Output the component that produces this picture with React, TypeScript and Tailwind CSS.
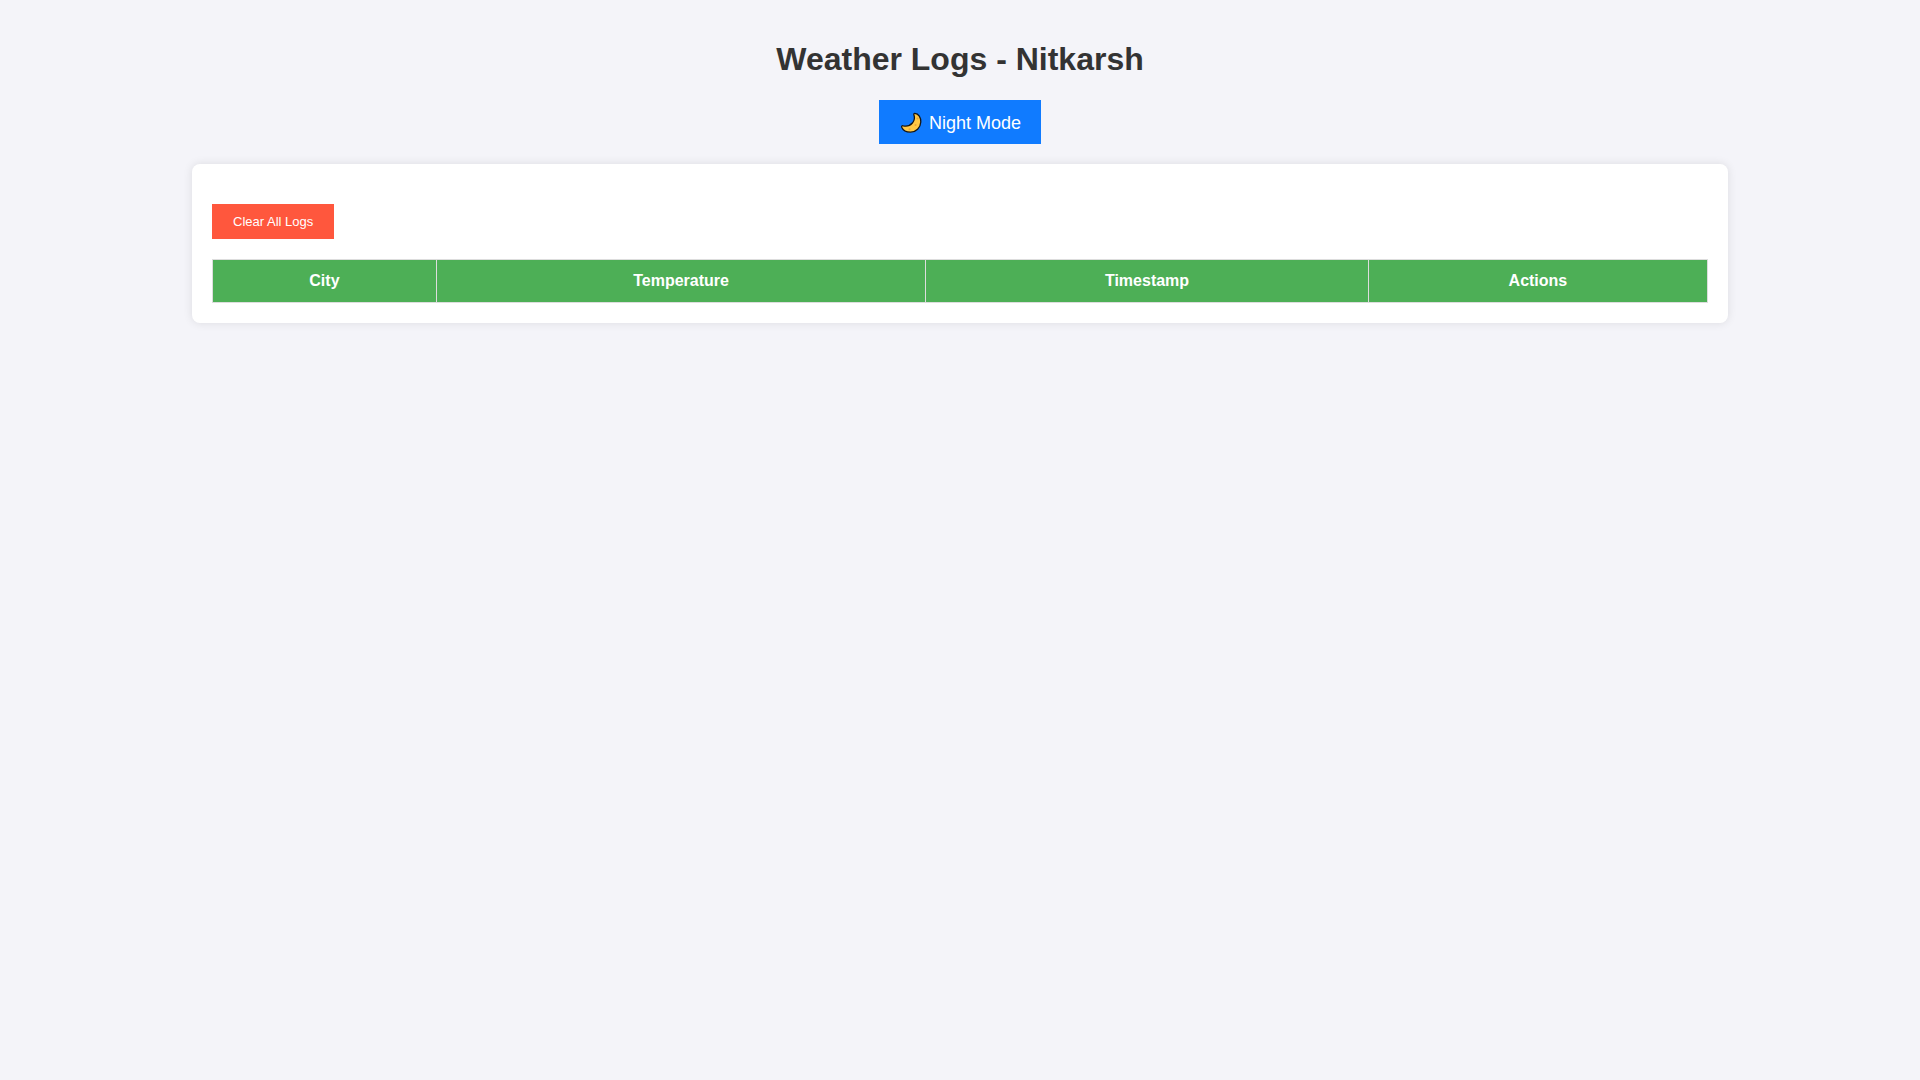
import React from "react";

const columns = ["City", "Temperature", "Timestamp", "Actions"];

function MoonIcon() {
  return (
    <svg className="size-6" viewBox="0 0 24 24" aria-hidden="true">
      <path
        d="M15.8 2.4C19.600 2.600 22 6.800 21.800 11C21.500 16.800 17 21.200 11.500 21.200C7.500 21.200 4 19.300 2.700 16.200C2.300 15 3.200 14.400 4.300 14.800C8 15.500 11.200 14.600 13.400 12C15.600 9.500 15.800 6.500 14.900 3.800C14.600 2.900 14.900 2.400 15.800 2.400Z"
        fill="#ffc845"
        stroke="#151515"
        strokeWidth="1.300"
        strokeLinejoin="round"
      />
      <g fill="#e9a53a">
        <circle cx="18.500" cy="7.500" r="1" />
        <circle cx="16.500" cy="14" r="1" />
        <circle cx="10.500" cy="18.300" r="1" />
      </g>
    </svg>
  );
}

export default function App() {
  return (
    <main className="flex min-h-screen flex-col items-center bg-[#f4f4f9] pt-10 font-['Liberation_Sans',Arial,sans-serif] text-[#333]">
      <h1 className="text-[32px] leading-[38px] font-bold">Weather Logs - Nitkarsh</h1>
      <button type="button" className="mt-[22px] flex h-11 items-center gap-1.5 bg-[#107bff] px-5 pt-0.5 text-lg text-white">
        <MoonIcon />
        Night Mode
      </button>
      <section className="mt-5 w-4/5 rounded-lg bg-white p-5 shadow-[0_0_10px_rgba(0,0,0,0.1)]">
        <button type="button" className="mt-5 block bg-[#ff573d] px-[21px] py-2.5 text-[13px] leading-[15px] text-white">
          Clear All Logs
        </button>
        <table className="mt-5 w-full border-collapse">
          <thead>
            <tr>
              {columns.map((c) => (
                <th key={c} className="border border-[#ddd] bg-[#4daf56] p-3 text-base leading-[18px] font-bold text-white">
                  {c}
                </th>
              ))}
            </tr>
          </thead>
        </table>
      </section>
    </main>
  );
}
